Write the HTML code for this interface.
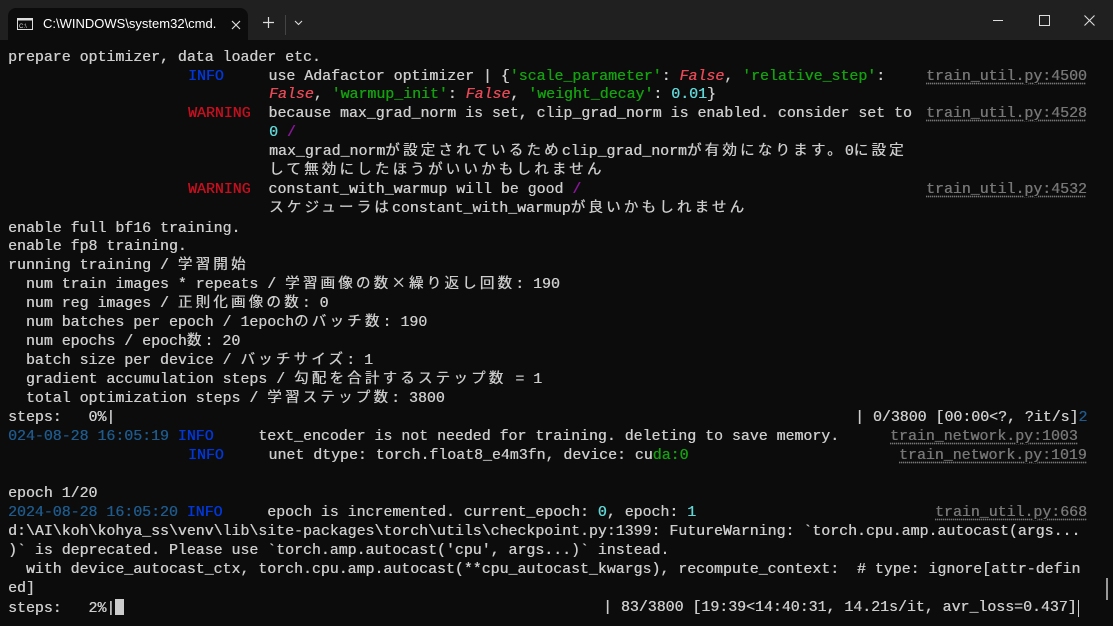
<!DOCTYPE html>
<html><head><meta charset="utf-8"><style>
html,body{margin:0;padding:0;width:1113px;height:626px;overflow:hidden;background:#0c0c0c;}
#tb{position:absolute;left:0;top:0;width:1113px;height:40px;background:#202020;}
#tab{position:absolute;left:8px;top:8px;width:240px;height:32px;background:#0c0c0c;border-radius:8px 8px 0 0;}
#tab .t{position:absolute;left:35px;top:8px;font:13px "Liberation Sans",sans-serif;color:#fff;}
.l{position:absolute;left:0;height:19px;white-space:pre;font-family:"Liberation Mono","Noto Sans CJK JP",monospace;font-size:14.9px;line-height:19px;color:#cccccc;text-shadow:0.35px 0 0 currentColor;}
.j{font-family:"Noto Sans CJK JP",sans-serif;letter-spacing:3.2px;font-size:14.5px;line-height:0;}
.b{color:#0037da}.r{color:#c50f1f}.g{color:#13a10e}.c{color:#61d6d6}.f{color:#e74856;font-style:italic}.p{color:#881798}
.ts{color:#1e5a8c}.fn{color:#767676;text-decoration:underline dotted;text-underline-offset:3px}
</style></head><body>
<div id="tb">
<div id="tab">
<svg style="position:absolute;left:9px;top:10px" width="16" height="12"><rect x="0.5" y="0.5" width="15" height="11" fill="none" stroke="#ddd"/><rect x="0.5" y="0.5" width="15" height="2" fill="#ddd"/><text x="2" y="10" font-size="6" fill="#ddd" font-family="Liberation Sans">C:\_</text></svg>
<div class="t">C:\WINDOWS\system32\cmd.</div>
<svg style="position:absolute;left:223px;top:12px" width="10" height="10"><path d="M1 1L9 9M9 1L1 9" stroke="#ddd" stroke-width="1.2"/></svg>
</div>
<svg style="position:absolute;left:263px;top:17px" width="11" height="11"><path d="M5.5 0V11M0 5.5H11" stroke="#ddd" stroke-width="1.2"/></svg>
<div style="position:absolute;left:285px;top:15px;width:1px;height:20px;background:#444"></div>
<svg style="position:absolute;left:294px;top:20px" width="9" height="6"><path d="M1 1L4.5 4.5L8 1" stroke="#ddd" fill="none" stroke-width="1.1"/></svg>
<div style="position:absolute;left:993px;top:20px;width:10px;height:1px;background:#ddd"></div>
<div style="position:absolute;left:1039px;top:15px;width:9px;height:9px;border:1px solid #ddd"></div>
<svg style="position:absolute;left:1084px;top:15px" width="11" height="11"><path d="M0.5 0.5L10.5 10.5M10.5 0.5L0.5 10.5" stroke="#ddd" stroke-width="1.1"/></svg>
</div>

<div class="l" style="top:49px;left:8px">prepare optimizer, data loader etc.</div>
<div class="l" style="top:68px;left:188px"><span class="b">INFO</span>     use Adafactor optimizer | {<span class="g">'scale_parameter'</span>: <span class="f">False</span>, <span class="g">'relative_step'</span>:</div>
<div class="l fn" style="top:68px;left:926px">train_util.py:4500</div>
<div class="l" style="top:86px;left:269px"><span class="f">False</span>, <span class="g">'warmup_init'</span>: <span class="f">False</span>, <span class="g">'weight_decay'</span>: <span class="c">0.01</span>}</div>
<div class="l" style="top:105px;left:188px"><span class="r">WARNING</span>  because max_grad_norm is set, clip_grad_norm is enabled. consider set to</div>
<div class="l fn" style="top:105px;left:926px">train_util.py:4528</div>
<div class="l" style="top:124px;left:269px"><span class="c">0</span> <span class="p">/</span></div>
<div class="l" style="top:143px;left:269px">max_grad_norm<span class="j">が設定されているため</span>clip_grad_norm<span class="j">が有効になります。</span>0<span class="j">に設定</span></div>
<div class="l" style="top:162px;left:269px"><span class="j">して無効にしたほうがいいかもしれません</span></div>
<div class="l" style="top:181px;left:188px"><span class="r">WARNING</span>  constant_with_warmup will be good <span class="p">/</span></div>
<div class="l fn" style="top:181px;left:926px">train_util.py:4532</div>
<div class="l" style="top:200px;left:269px"><span class="j">スケジューラは</span>constant_with_warmup<span class="j">が良いかもしれません</span></div>
<div class="l" style="top:220px;left:8px">enable full bf16 training.</div>
<div class="l" style="top:238px;left:8px">enable fp8 training.</div>
<div class="l" style="top:257px;left:8px">running training / <span class="j">学習開始</span></div>
<div class="l" style="top:276px;left:8px">  num train images * repeats / <span class="j">学習画像の数×繰り返し回数</span>: 190</div>
<div class="l" style="top:295px;left:8px">  num reg images / <span class="j">正則化画像の数</span>: 0</div>
<div class="l" style="top:314px;left:8px">  num batches per epoch / 1epoch<span class="j">のバッチ数</span>: 190</div>
<div class="l" style="top:333px;left:8px">  num epochs / epoch<span class="j">数</span>: 20</div>
<div class="l" style="top:352px;left:8px">  batch size per device / <span class="j">バッチサイズ</span>: 1</div>
<div class="l" style="top:371px;left:8px">  gradient accumulation steps / <span class="j">勾配を合計するステップ数</span> = 1</div>
<div class="l" style="top:390px;left:8px">  total optimization steps / <span class="j">学習ステップ数</span>: 3800</div>
<div class="l" style="top:409px;left:8px">steps:   0%|</div>
<div class="l" style="top:409px;left:855px">| 0/3800 [00:00&lt;?, ?it/s]<span class="ts">2</span></div>
<div class="l" style="top:428px;left:8px"><span class="ts">024-08-28 16:05:19</span> <span class="b">INFO</span>     text_encoder is not needed for training. deleting to save memory.</div>
<div class="l fn" style="top:428px;left:890px">train_network.py:1003</div>
<div class="l" style="top:447px;left:188px"><span class="b">INFO</span>     unet dtype: torch.float8_e4m3fn, device: cu<span class="g">da:0</span></div>
<div class="l fn" style="top:447px;left:899px">train_network.py:1019</div>
<div class="l" style="top:485px;left:8px">epoch 1/20</div>
<div class="l" style="top:504px;left:8px"><span class="ts">2024-08-28 16:05:20</span> <span class="b">INFO</span>     epoch is incremented. current_epoch: <span class="c">0</span>, epoch: <span class="c">1</span></div>
<div class="l fn" style="top:504px;left:935px">train_util.py:668</div>
<div class="l" style="top:523px;left:8px">d:\AI\koh\kohya_ss\venv\lib\site-packages\torch\utils\checkpoint.py:1399: FutureWarning: `torch.cpu.amp.autocast(args...</div>
<div class="l" style="top:542px;left:8px">)` is deprecated. Please use `torch.amp.autocast('cpu', args...)` instead.</div>
<div class="l" style="top:561px;left:8px">  with device_autocast_ctx, torch.cpu.amp.autocast(**cpu_autocast_kwargs), recompute_context:  # type: ignore[attr-defin</div>
<div class="l" style="top:580px;left:8px">ed]</div>
<div class="l" style="top:599px;left:8px">steps:   2%|<span style="display:inline-block;width:9px;height:16px;background:#ccc;vertical-align:-3px"></span></div>
<div class="l" style="top:599px;left:603px">| 83/3800 [19:39&lt;14:40:31, 14.21s/it, avr_loss=0.437]</div>
<div style="position:absolute;left:1078px;top:600px;width:1px;height:17px;background:#ccc"></div>
<div style="position:absolute;left:1106px;top:578px;width:2px;height:22px;background:#999"></div>
</body></html>
